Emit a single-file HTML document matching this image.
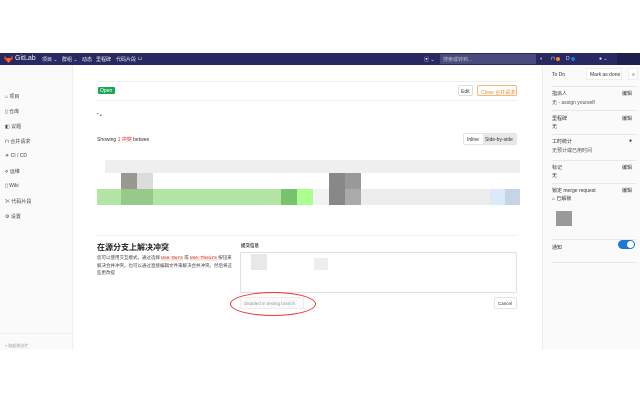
<!DOCTYPE html>
<html><head><meta charset="utf-8"><style>
*{margin:0;padding:0;box-sizing:border-box;white-space:nowrap}
body{width:640px;height:400px;position:relative;background:#fff;font-family:"Liberation Sans","Noto Sans CJK SC",sans-serif;font-size:5px;color:#333;overflow:hidden}
.a{position:absolute}
.nav{left:0;top:53px;width:640px;height:12px;background:#292961;color:#fff}
.nav span{position:absolute;top:3px;font-size:5px;color:#e8e8f0}
.ls{left:0;top:65px;width:73px;height:285px;background:#fafafa;border-right:1px solid #eee}
.ls div{position:absolute;left:5px;font-size:5px;color:#444}
.rs{left:542px;top:65px;width:98px;height:285px;background:#fafafa;border-left:1px solid #eee}
.rs .t{position:absolute;left:9px;font-size:5px;color:#333}
.rs .e{position:absolute;right:8px;font-size:5px;color:#333}
.rs .hr{position:absolute;left:9px;right:3px;height:1px;background:#e8e8e8}
.b{position:absolute}
</style></head><body>
<div class="a nav">
 <svg class="a" style="left:4px;top:2px" width="9" height="8" viewBox="0 0 10 9"><path d="M5 9L0 4 1 0 2.5 3.5h5L9 0l1 4z" fill="#e24329"/><path d="M5 9L2.5 3.5h5z" fill="#fc6d26"/></svg>
 <span style="left:15px;top:2px;font-size:7px;color:#eee">GitLab</span>
 <span style="left:42px">项目 ⌄</span><span style="left:62px">群组 ⌄</span><span style="left:82px">动态</span><span style="left:96px">里程碑</span><span style="left:116px">代码片段</span><span style="left:138px">⊔</span>
 <span style="left:424px">▣ ⌄</span>
 <div class="a" style="left:440px;top:1px;width:96px;height:10px;background:#4a4a7f;border-radius:1px"></div>
 <span style="left:443px;color:#bbb">搜索或转到...</span><span style="left:540px">◐</span>
 <div class="a" style="left:556px;top:4px;width:4px;height:4px;background:#f28a1e;border-radius:2px"></div><span style="left:551px">⊓</span>
 <span style="left:566px">D</span><div class="a" style="left:571px;top:4px;width:4px;height:4px;background:#1f78d1;border-radius:2px"></div>
 <span style="left:599px">● ⌄</span>
 <div class="a" style="left:617px;top:0;width:23px;height:12px;background:#1e1e50"></div>
</div>
<div class="a ls">
 <div style="top:28px">⌂ 项目</div><div style="top:43px">▯ 仓库</div><div style="top:58px">◧ 议题</div><div style="top:73px">⊓ 合并请求</div><div style="top:88px">✈ CI / CD</div><div style="top:103px">⟡ 运维</div><div style="top:118px">▯ Wiki</div><div style="top:133px">✂ 代码片段</div><div style="top:148px">⚙ 设置</div>
 <div style="top:268px;left:0;width:73px;height:1px;background:#eee"></div>
 <div style="top:278px;color:#999;font-size:4px">« 收起侧边栏</div>
</div>
<div class="a" style="left:97px;top:81px;width:420px;height:1px;background:#eee"></div>
<div class="a" style="left:98px;top:87px;width:17px;height:7px;background:#1aaa55;color:#fff;font-size:5px;padding:1px 2px;border-radius:1px">Open</div>
<div class="a" style="left:97px;top:100px;width:420px;height:1px;background:#eee"></div>
<div class="a" style="left:458px;top:85px;width:15px;height:11px;border:1px solid #ddd;border-radius:2px;font-size:5px;padding:3px 2px">Edit</div>
<div class="a" style="left:477px;top:85px;width:40px;height:11px;border:1px solid #f8b77b;border-radius:2px;font-size:5px;padding:3px 3px;color:#f08a24">Close 合并请求</div>
<div class="a" style="left:97px;top:113px;font-size:5px">˜ •</div>
<div class="a" style="left:97px;top:136px;font-size:5px">Showing <span style="color:#d22">1 冲突</span> betwee</div>
<div class="a" style="left:463px;top:133px;width:54px;height:12px;border:1px solid #e4e4e4;border-radius:2px;font-size:5px"><span class="a" style="left:3px;top:3px">Inline</span><span class="a" style="left:19px;top:0;width:34px;height:10px;background:#e8e8e8;padding:3px 2px">Side-by-side</span></div>
<div class="b" style="left:105px;top:160px;width:415px;height:13px;background:#efefef"></div>
<div class="b" style="left:121px;top:173px;width:16px;height:16px;background:#9a9990"></div>
<div class="b" style="left:137px;top:173px;width:16px;height:16px;background:#dcdcdc"></div>
<div class="b" style="left:329px;top:173px;width:16px;height:32px;background:#888"></div>
<div class="b" style="left:345px;top:173px;width:16px;height:16px;background:#999"></div>
<div class="b" style="left:97px;top:189px;width:216px;height:16px;background:#b3e6a4"></div>
<div class="b" style="left:121px;top:189px;width:32px;height:16px;background:#97c98a"></div>
<div class="b" style="left:281px;top:189px;width:16px;height:16px;background:#77c46c"></div>
<div class="b" style="left:297px;top:189px;width:16px;height:16px;background:#aaff90"></div>
<div class="b" style="left:313px;top:189px;width:16px;height:16px;background:#f2f2f2"></div>
<div class="b" style="left:345px;top:189px;width:16px;height:16px;background:#aaa"></div>
<div class="b" style="left:361px;top:189px;width:129px;height:16px;background:#ededed"></div>
<div class="b" style="left:490px;top:189px;width:15px;height:16px;background:#dbe9fb"></div>
<div class="b" style="left:505px;top:189px;width:15px;height:16px;background:#c5d5e5"></div>
<div class="a" style="left:97px;top:235px;width:420px;height:1px;background:#eee"></div>
<div class="a" style="left:97px;top:242px;font-size:8px;font-weight:bold;color:#222">在源分支上解决冲突</div>
<div class="a" style="left:97px;top:254px;width:135px;font-size:4.5px;line-height:7px;color:#444;white-space:normal">您可以使用交互模式，通过选择 <span style="color:#c0341d;background:#fbe5e1;font-family:'Liberation Mono',monospace">Use Ours</span> 或 <span style="color:#c0341d;background:#fbe5e1;font-family:'Liberation Mono',monospace">Use Theirs</span> 按钮来解决合并冲突。也可以通过直接编辑文件来解决合并冲突。然后将这些更改提</div>
<div class="a" style="left:241px;top:243px;font-size:4.5px;font-weight:bold">提交信息</div>
<div class="a" style="left:240px;top:252px;width:277px;height:41px;border:1px solid #e0e0e0;border-radius:2px"></div>
<div class="b" style="left:251px;top:254px;width:16px;height:16px;background:#e8e8e8"></div>
<div class="b" style="left:314px;top:258px;width:14px;height:12px;background:#eee"></div>
<div class="a" style="left:240px;top:297px;width:64px;height:12px;border:1px solid #eee;background:#fafafa;color:#999;font-size:4.5px;padding:3px 3px">disabled in testing branch</div>
<div class="a" style="left:230px;top:292px;width:86px;height:24px;border:1px solid #e33;border-radius:50%"></div>
<div class="a" style="left:494px;top:297px;width:23px;height:12px;border:1px solid #e4e4e4;border-radius:2px;font-size:4.5px;padding:3px 3px">Cancel</div>
<div class="a rs">
 <div class="t" style="top:7px">To Do</div>
 <div class="a" style="left:43px;top:3px;width:36px;height:12px;background:#fff;border:1px solid #eee;font-size:5px;padding:3px 3px">Mark as done</div>
 <div class="a" style="left:85px;top:3px;width:10px;height:12px;background:#fff;border:1px solid #eee;font-size:5px;padding:3px 3px">»</div>
 <div class="hr" style="top:21px"></div>
 <div class="t" style="top:25px">指派人</div><div class="e" style="top:25px">编辑</div><div class="t" style="top:34px;color:#555">无 - assign yourself</div>
 <div class="hr" style="top:45px"></div>
 <div class="t" style="top:50px">里程碑</div><div class="e" style="top:50px">编辑</div><div class="t" style="top:58px">无</div>
 <div class="hr" style="top:69px"></div>
 <div class="t" style="top:73px">工时统计</div><div class="e" style="top:73px">●</div><div class="t" style="top:82px;color:#555">无预计或已用时间</div>
 <div class="hr" style="top:95px"></div>
 <div class="t" style="top:99px">标记</div><div class="e" style="top:99px">编辑</div><div class="t" style="top:107px">无</div>
 <div class="hr" style="top:118px"></div>
 <div class="t" style="top:122px">锁定 merge request</div><div class="e" style="top:122px">编辑</div><div class="t" style="top:130px">⌂ 已解锁</div>
 <div class="a" style="left:13px;top:146px;width:16px;height:15px;background:#999"></div>
 <div class="hr" style="top:174px"></div>
 <div class="t" style="top:179px">通知</div>
 <div class="a" style="left:75px;top:175px;width:17px;height:9px;background:#1f78d1;border-radius:5px"><div class="a" style="left:9px;top:1px;width:7px;height:7px;background:#fff;border-radius:50%"></div></div>
 <div class="hr" style="top:197px"></div>
</div>
</body></html>
